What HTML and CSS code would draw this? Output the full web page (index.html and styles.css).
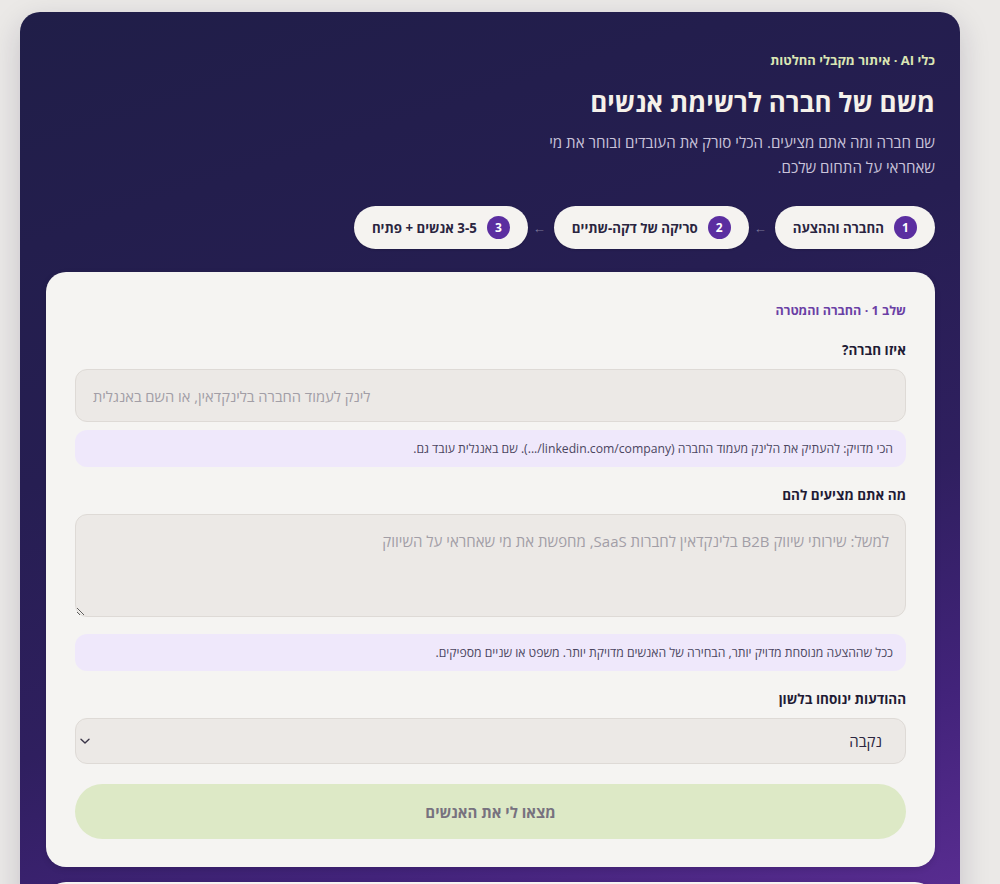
FILE: index.html
```html
<!DOCTYPE html>
<html lang="he" dir="rtl">
<head>
<meta charset="utf-8">
<title>משם של חברה לרשימת אנשים</title>
<link rel="stylesheet" href="styles.css">
</head>
<body>
<div class="page">
  <main class="panel">
    <p class="eyebrow">כלי AI · איתור מקבלי החלטות</p>
    <h1 class="title">משם של חברה לרשימת אנשים</h1>
    <p class="lead">שם חברה ומה אתם מציעים. הכלי סורק את העובדים ובוחר את מי שאחראי על התחום שלכם.</p>

    <ol class="steps">
      <li class="step"><span class="num">1</span><span class="step-text">החברה וההצעה</span></li>
      <li class="arrow">←</li>
      <li class="step"><span class="num">2</span><span class="step-text">סריקה של דקה-שתיים</span></li>
      <li class="arrow">←</li>
      <li class="step"><span class="num">3</span><span class="step-text">3-5 אנשים + פתיח</span></li>
    </ol>

    <section class="card">
      <p class="card-step">שלב 1 · החברה והמטרה</p>

      <div class="field">
        <label class="label" for="company">איזו חברה?</label>
        <input id="company" class="input" type="text" dir="ltr" placeholder="לינק לעמוד החברה בלינקדאין, או השם באנגלית">
        <p class="hint">הכי מדויק: להעתיק את הלינק מעמוד החברה (linkedin.com/company/...). שם באנגלית עובד גם.</p>
      </div>

      <div class="field">
        <label class="label" for="offer">מה אתם מציעים להם</label>
        <textarea id="offer" class="textarea" placeholder="למשל: שירותי שיווק B2B בלינקדאין לחברות SaaS, מחפשת את מי שאחראי על השיווק"></textarea>
        <p class="hint hint-after-area">ככל שההצעה מנוסחת מדויק יותר, הבחירה של האנשים מדויקת יותר. משפט או שניים מספיקים.</p>
      </div>

      <div class="field">
        <label class="label" for="gender">ההודעות ינוסחו בלשון</label>
        <div class="select-wrap">
          <select id="gender" class="select">
            <option>נקבה</option>
            <option>זכר</option>
          </select>
          <svg class="chev" width="12" height="12" viewBox="0 0 12 12" aria-hidden="true"><path d="M2 4.2 L6 8 L10 4.2" fill="none" stroke="#3a3548" stroke-width="1.4" stroke-linecap="round" stroke-linejoin="round"/></svg>
        </div>
      </div>

      <button class="submit" type="button" disabled>מצאו לי את האנשים</button>
    </section>

    <section class="card card-next"></section>
  </main>
</div>
</body>
</html>
```

FILE: styles.css
```css
* { box-sizing: border-box; }

html, body {
  margin: 0;
  background: #ebe9e7;
}

body {
  font-family: "Open Sans", "Liberation Sans", "DejaVu Sans", sans-serif;
  color: #1f1b35;
}

.page {
  padding: 12px 40px 0 20px;
}

.panel {
  direction: rtl;
  border-radius: 20px;
  padding: 40px 25px 26px 26px;
  background: linear-gradient(162deg, #201e48 0%, #261e52 35%, #2f1f5f 55%, #42237a 72%, #5a2d92 88%, #6a35a5 100%);
  box-shadow: 0 10px 30px rgba(30, 20, 60, 0.18);
}

.eyebrow {
  margin: 0;
  font-size: 13px;
  line-height: 17px;
  font-weight: 700;
  color: #dbe6b4;
}

.title {
  margin: 15px 0 0;
  font-size: 26px;
  line-height: 36px;
  font-weight: 700;
  color: #f5f1ea;
}

.lead {
  margin: 10px 0 0;
  max-width: 402px;
  font-size: 15.1px;
  line-height: 25px;
  color: #c9c3da;
}

.steps {
  list-style: none;
  margin: 26px 0 0;
  padding: 0;
  display: flex;
  align-items: center;
  gap: 8px;
}

.step {
  display: flex;
  align-items: center;
  gap: 10px;
  height: 43px;
  padding: 0 18px;
  border-radius: 999px;
  background: #f5f3f0;
  box-shadow: 0 1px 2px rgba(0, 0, 0, 0.15);
}

.num {
  width: 23px;
  height: 23px;
  border-radius: 50%;
  background: #5b2ea0;
  color: #ffffff;
  font-size: 12px;
  font-weight: 700;
  display: flex;
  align-items: center;
  justify-content: center;
}

.step-text {
  font-size: 13.3px;
  font-weight: 700;
  color: #2a2540;
}

.arrow {
  font-size: 13px;
  color: #7d7799;
  width: 10px;
  text-align: center;
}

.card {
  margin-top: 23px;
  background: #f5f4f2;
  border-radius: 20px;
  padding: 31px 29px 28px;
  box-shadow: 0 2px 6px rgba(0, 0, 0, 0.12);
}

.card-step {
  margin: 0;
  font-size: 12.6px;
  line-height: 16px;
  font-weight: 700;
  color: #6a3fa5;
}

.field {
  margin-top: 22px;
}

.field + .field {
  margin-top: 19px;
}

.label {
  display: block;
  font-size: 13.5px;
  line-height: 18px;
  font-weight: 700;
  color: #1f1b35;
  margin-bottom: 10px;
}

.input,
.textarea,
.select {
  display: block;
  width: 100%;
  font-family: inherit;
  font-size: 15px;
  color: #2a2540;
  background: #ece9e6;
  border: 1px solid #dedad6;
  border-radius: 12px;
  outline: none;
}

.input {
  height: 53px;
  padding: 0 17px;
  font-size: 14.7px;
  text-align: left;
}

.input::placeholder,
.textarea::placeholder {
  color: #a29ea6;
  opacity: 1;
}

.textarea {
  height: 103px;
  padding: 15px 16px;
  line-height: 22px;
  resize: vertical;
}

.hint {
  margin: 8px 0 0;
  padding: 10px 13px;
  border-radius: 12px;
  background: #efe8fb;
  font-size: 12.2px;
  line-height: 17px;
  color: #4b4660;
}

.hint-after-area {
  margin-top: 17px;
}

.select-wrap {
  position: relative;
}

.select {
  height: 46px;
  padding: 0 23px 0 40px;
  appearance: none;
  -webkit-appearance: none;
  cursor: pointer;
}

.chev {
  position: absolute;
  left: 4px;
  top: 17px;
}

.submit {
  display: block;
  width: 100%;
  height: 55px;
  margin-top: 20px;
  border: none;
  border-radius: 999px;
  background: #dde9c6;
  font-family: inherit;
  font-size: 15px;
  font-weight: 700;
  color: #77727f;
}

.card-next {
  margin-top: 15px;
  height: 160px;
  padding: 0;
}
```
